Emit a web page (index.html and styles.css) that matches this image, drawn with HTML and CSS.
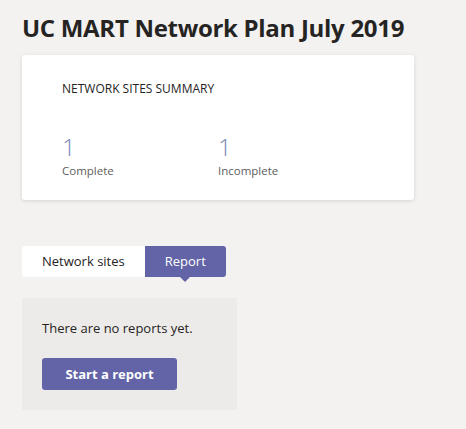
FILE: index.html
```html
<!DOCTYPE html>
<html>
<head>
<meta charset="utf-8">
<link rel="stylesheet" href="styles.css">
</head>
<body>
<div class="page">
  <h1 class="title">UC MART Network Plan July 2019</h1>
  <div class="card">
    <div class="card-heading">NETWORK SITES SUMMARY</div>
    <div class="stats">
      <div class="stat">
        <div class="stat-value">1</div>
        <div class="stat-label">Complete</div>
      </div>
      <div class="stat">
        <div class="stat-value">1</div>
        <div class="stat-label">Incomplete</div>
      </div>
    </div>
  </div>
  <div class="tabs">
    <div class="tab">Network sites</div>
    <div class="tab tab-active">Report</div>
  </div>
  <div class="panel">
    <p class="panel-text">There are no reports yet.</p>
    <button class="btn">Start a report</button>
  </div>
</div>
</body>
</html>
```
FILE: styles.css
```css
html, body {
  margin: 0;
  padding: 0;
  background: #f3f2f1;
}
body {
  font-family: "Open Sans", "Noto Sans", sans-serif;
  color: #252423;
}
.page {
  padding: 12px 22px 0 22px;
}
.title {
  margin: 0;
  font-size: 24px;
  font-weight: 700;
  line-height: 32px;
  color: #252423;
  letter-spacing: -0.3px;
}
.card {
  margin-top: 11px;
  width: 392px;
  height: 145px;
  box-sizing: border-box;
  background: #fff;
  border-radius: 3px;
  box-shadow: 0 1px 4px rgba(0,0,0,0.12);
  padding: 26px 40px 0 40px;
}
.card-heading {
  font-size: 12px;
  line-height: 16px;
}
.stats {
  display: flex;
  margin-top: 36px;
}
.stat {
  width: 156px;
}
.stat-value {
  font-size: 24px;
  font-weight: 300;
  line-height: 28px;
  color: #7b88b8;
}
.stat-label {
  font-size: 11.5px;
  line-height: 16px;
  color: #605e5c;
  margin-top: 2px;
}
.tabs {
  display: flex;
  margin-top: 46px;
}
.tab {
  height: 31px;
  line-height: 31px;
  padding: 0 20px;
  font-size: 13px;
  background: #fff;
  border-radius: 3px 0 0 3px;
  color: #252423;
}
.tab-active {
  position: relative;
  background: #6264a7;
  color: #fff;
  border-radius: 0 3px 3px 0;
}
.tab-active::after {
  content: "";
  position: absolute;
  left: 50%;
  bottom: -5px;
  margin-left: -5px;
  border-left: 5px solid transparent;
  border-right: 5px solid transparent;
  border-top: 5px solid #6264a7;
}
.panel {
  margin-top: 21px;
  width: 215px;
  height: 112px;
  box-sizing: border-box;
  background: #edebe9;
  padding: 20px 20px 0 20px;
}
.panel-text {
  margin: 0;
  font-size: 13px;
  line-height: 20px;
}
.btn {
  margin-top: 20px;
  width: 135px;
  height: 32px;
  border: none;
  border-radius: 3px;
  background: #6264a7;
  color: #fff;
  font-family: inherit;
  font-size: 13px;
  font-weight: 700;
  padding: 0;
}
```
